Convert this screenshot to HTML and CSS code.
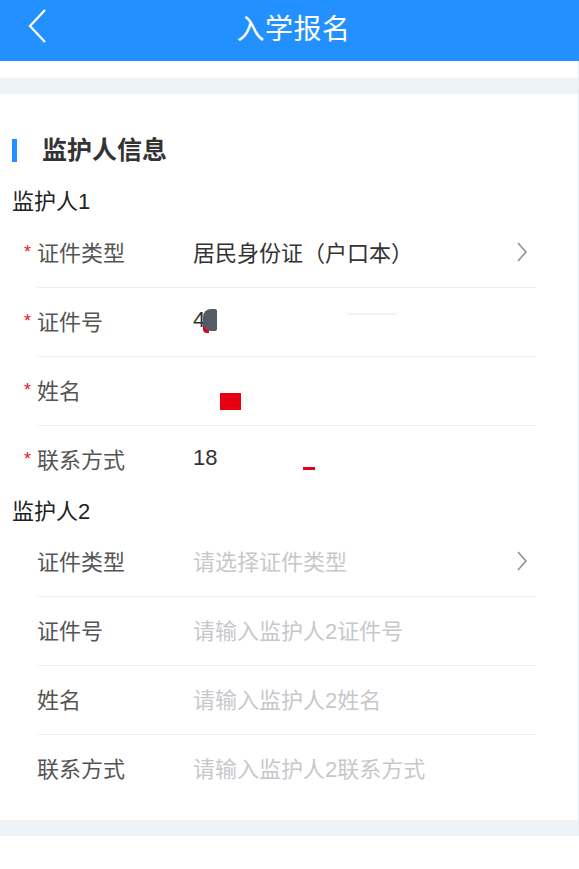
FILE: index.html
```html
<!DOCTYPE html>
<html>
<head>
<meta charset="utf-8">
<link rel="stylesheet" href="styles.css">
</head>
<body>

<div class="topbar">
    <svg class="back" width="20" height="36" viewBox="0 0 20 36"><path d="M18 2 L3 18 L18 34" fill="none" stroke="#fff" stroke-width="2.2"/></svg>
    <h1>入学报名</h1>
</div>

<div class="page">
    <div class="gap"></div>
    <div class="band"></div>

    <div class="card">
        <h2 class="title">监护人信息</h2>

        <div class="guardian first">监护人1</div>
        <div class="rows">
            <div class="row">
                <div class="label"><span class="req">*</span>证件类型</div>
                <div class="value">居民身份证（户口本）</div>
                <svg class="arrow" width="10" height="20" viewBox="0 0 10 20"><path d="M1 1 L9 10 L1 19" fill="none" stroke="#8a8f99" stroke-width="1.6"/></svg>
            </div>
            <div class="row">
                <div class="label"><span class="req">*</span>证件号</div>
                <div class="value">4<span class="mask dark"></span><span class="mask line"></span></div>
            </div>
            <div class="row">
                <div class="label"><span class="req">*</span>姓名</div>
                <div class="value"><span class="mask red"></span></div>
            </div>
            <div class="row last">
                <div class="label"><span class="req">*</span>联系方式</div>
                <div class="value">18<span class="mask dash"></span></div>
            </div>
        </div>

        <div class="guardian">监护人2</div>
        <div class="rows">
            <div class="row">
                <div class="label">证件类型</div>
                <div class="value empty">请选择证件类型</div>
                <svg class="arrow" width="10" height="20" viewBox="0 0 10 20"><path d="M1 1 L9 10 L1 19" fill="none" stroke="#8a8f99" stroke-width="1.6"/></svg>
            </div>
            <div class="row">
                <div class="label">证件号</div>
                <div class="value empty">请输入监护人2证件号</div>
            </div>
            <div class="row">
                <div class="label">姓名</div>
                <div class="value empty">请输入监护人2姓名</div>
            </div>
            <div class="row last">
                <div class="label">联系方式</div>
                <div class="value empty">请输入监护人2联系方式</div>
            </div>
        </div>
    </div>

    <div class="band"></div>
</div>

</body>
</html>
```

FILE: styles.css
```css
body {
    margin: 0;
    padding: 0;
    background: #fff;
    font-family: "Liberation Sans", "Noto Sans CJK SC", sans-serif;
    color: #333;
}
.topbar {
    height: 61px;
    background: #2291ff;
    display: flex;
    align-items: center;
    justify-content: center;
    position: relative;
}
.topbar h1 {
    margin: 0 0 8px 8px;
    color: #fff;
    font-size: 28px;
    font-weight: normal;
    letter-spacing: 0.5px;
}
.topbar .back {
    position: absolute;
    left: 27px;
    top: 8px;
}
.page {
    border-right: 1px solid #e6edf3;
}
.gap {
    height: 17px;
}
.band {
    height: 16px;
    background: #eef3f7;
}
.card {
    padding: 40px 0 16px;
}
.title {
    margin: 5px 0 6px 12px;
    padding-left: 25px;
    border-left: 5px solid #2291ff;
    height: 23px;
    line-height: 23px;
    font-size: 25px;
    font-weight: bold;
    color: #333;
}
.guardian {
    padding: 5px 0 4px 12px;
    font-size: 22px;
    line-height: 24px;
    color: #222;
}
.guardian.first {
    padding-top: 22px;
    padding-bottom: 5px;
}
.rows {
    margin: 0 42px 0 37px;
}
.row {
    height: 68px;
    border-bottom: 1px solid #eeeeee;
    display: flex;
    align-items: center;
    font-size: 22px;
}
.row.last {
    border-bottom: none;
    height: 69px;
}
.label {
    width: 156px;
    color: #555;
    margin-bottom: 5px;
}
.req {
    display: inline-block;
    width: 13px;
    margin-left: -13px;
    color: #f0101e;
    font-size: 18px;
    vertical-align: 3px;
}
.value {
    flex: 1;
    color: #333;
    display: flex;
    align-items: center;
    margin-bottom: 5px;
}
.value.empty {
    color: #c6c8cc;
}
.arrow {
    margin-right: 9px;
    margin-bottom: 2px;
}
.mask {
    display: inline-block;
}
.mask.dark {
    width: 14px;
    height: 22px;
    background: #565a62;
    border-radius: 8px 2px 2px 8px;
    margin-left: -2px;
    box-shadow: -4px 6px 0 -4px #d8001c;
}
.mask.line {
    width: 50px;
    height: 2px;
    background: #f4f4f4;
    margin-left: 130px;
    margin-top: -12px;
}
.mask.red {
    width: 21px;
    height: 17px;
    background: #e60012;
    margin-left: 27px;
    margin-top: 26px;
}
.mask.dash {
    width: 12px;
    height: 3px;
    background: #e60012;
    margin-left: 86px;
    margin-top: 20px;
}
```
